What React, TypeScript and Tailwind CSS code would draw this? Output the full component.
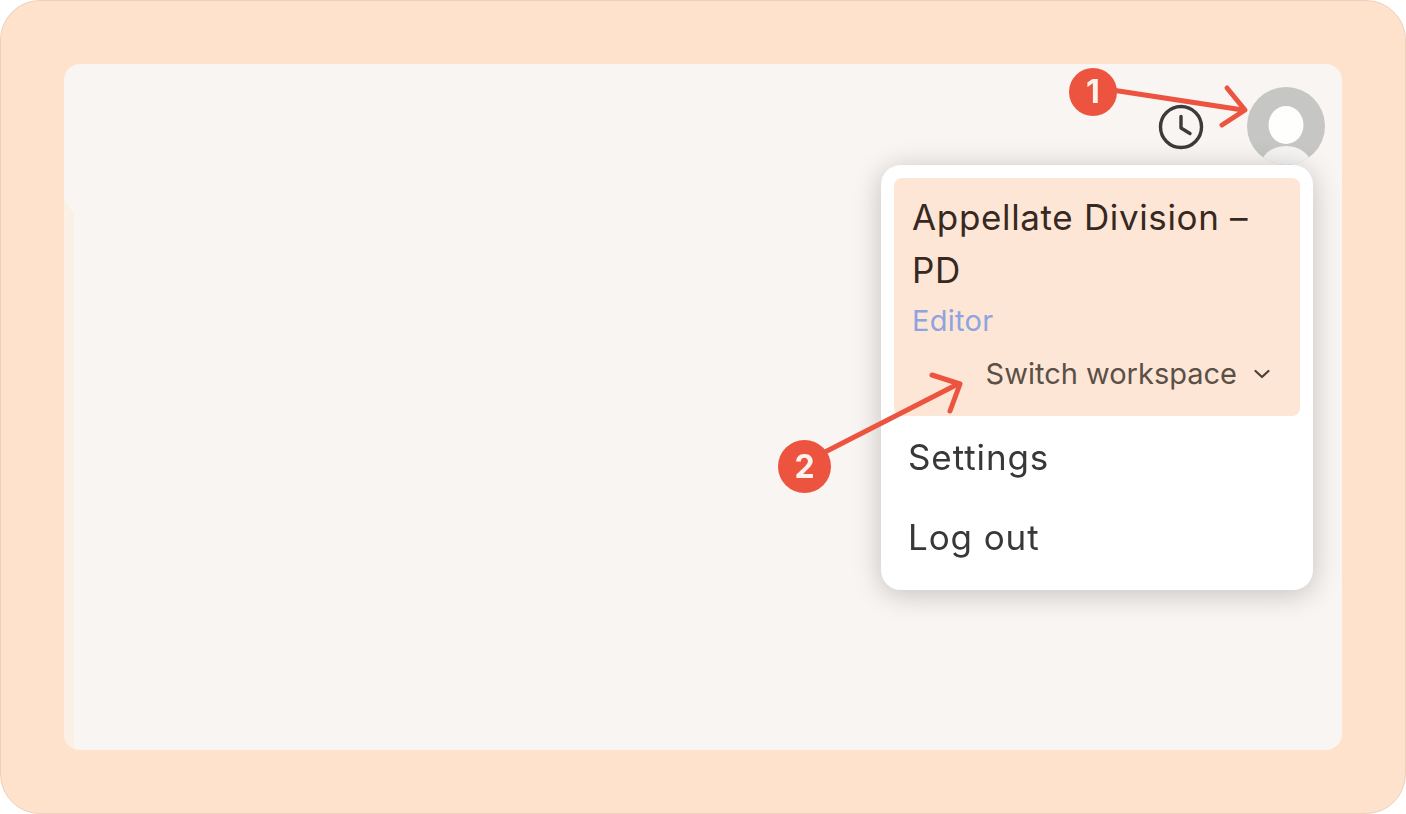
import React from "react";

const font = { fontFamily: "Inter, 'Liberation Sans', sans-serif" };

function ClockIcon() {
  return (
    <svg width="46" height="46" viewBox="0 0 46 46" fill="none" stroke="#3b3b3a" strokeWidth="3.4" strokeLinecap="round" strokeLinejoin="round">
      <circle cx="23" cy="23" r="20.5" />
      <path d="M23 12.5V24L32 29.5" />
    </svg>
  );
}

function Avatar() {
  return (
    <svg width="78" height="78" viewBox="0 0 78 78">
      <defs>
        <clipPath id="av"><circle cx="39" cy="39" r="39" /></clipPath>
      </defs>
      <g clipPath="url(#av)">
        <rect width="78" height="78" fill="#c6c6c5" />
        <ellipse cx="39" cy="38" rx="17.5" ry="19" fill="#fefefd" />
        <ellipse cx="39" cy="80" rx="26" ry="21" fill="#f6f4f2" />
      </g>
    </svg>
  );
}

function Chevron() {
  return (
    <svg width="20" height="20" viewBox="0 0 20 20" fill="none" stroke="#4b4038" strokeWidth="2.2" strokeLinecap="round" strokeLinejoin="round">
      <path d="M3.5 7 10 13 16.5 7" />
    </svg>
  );
}

function Arrows() {
  return (
    <svg className="absolute left-0 top-0" width="1406" height="814" viewBox="0 0 1406 814" fill="none" stroke="#ec5440" strokeWidth="5" strokeLinecap="round" strokeLinejoin="round">
      <path d="M1112 90 1243 110" />
      <path d="M1227 88 1245 110 1222 125" />
      <path d="M825 452 958 384" />
      <path d="M932 375 960 384 950 411" />
    </svg>
  );
}

export default function App() {
  return (
    <div style={font} className="relative h-[814px] w-[1406px] overflow-hidden bg-white">
      <div className="h-full w-full rounded-[40px] border border-[#ecd0bb] bg-[#fee2cc] p-[63px]">
        <div className="relative h-[686px] w-[1278px] overflow-hidden rounded-[16px] bg-[#f9f5f2] blur-[0.7px]">
          <div className="absolute bottom-0 left-0 top-[136px] w-[10px] bg-[#fbf0e6] [clip-path:polygon(0_0,100%_14px,100%_100%,0_100%)]" />
          <header className="flex items-start justify-end gap-[43px] pr-[17px] pt-[23px]">
            <div className="pt-[17px]">
              <ClockIcon />
            </div>
            <Avatar />
          </header>
        </div>
      </div>

      <div className="absolute left-[881px] top-[165px] h-[425px] w-[432px] rounded-[20px] bg-white p-[13px] shadow-[0_4px_28px_rgba(0,0,0,0.22)] blur-[0.5px]">
        <div className="h-[238px] rounded-[8px] bg-[#fee6d6] pl-[18px] pr-[28px] pt-[13px]">
          <div className="text-[35px] leading-[53px] tracking-[0.65px] text-[#37291f]">
            Appellate Division –<br />PD
          </div>
          <div className="mt-[4px] text-[29px] leading-[40px] tracking-[0.3px] text-[#8ea4de]">Editor</div>
          <div className="mt-[13px] flex items-center justify-end gap-[15px] text-[29px] leading-[40px] text-[#5b5047]">
            <span>Switch workspace</span>
            <Chevron />
          </div>
        </div>
        <div className="flex flex-col pl-[14px] text-[35px] tracking-[0.9px] text-[#383838]">
          <div className="flex h-[80px] items-center pt-[3px]">Settings</div>
          <div className="flex h-[80px] items-center pt-[3px]">Log out</div>
        </div>
      </div>

      <Arrows />
      <div className="absolute left-[1069px] top-[68px] flex h-[48px] w-[48px] items-center justify-center rounded-full bg-[#ec5440] text-[32px] font-bold text-[#fdf3ec]">
        1
      </div>
      <div className="absolute left-[778px] top-[440px] flex h-[53px] w-[53px] items-center justify-center rounded-full bg-[#ec5440] text-[32px] font-bold text-[#fdf3ec]">
        2
      </div>
    </div>
  );
}
